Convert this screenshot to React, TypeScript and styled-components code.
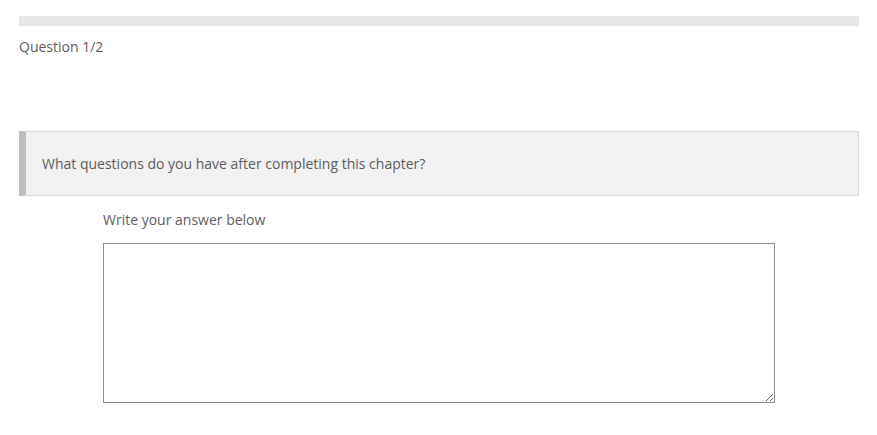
import React from "react";
import styled, { createGlobalStyle } from "styled-components";

const Global = createGlobalStyle`
  html, body {
    margin: 0;
    padding: 0;
    background: #fff;
  }
  body {
    font-family: "Open Sans", "Liberation Sans", sans-serif;
    color: #5e5e5e;
  }
`;

export default function App() {
  return (
    <>
      <Global />
      <Page>
        <Progress>
          <ProgressFill style={{ width: "0%" }} />
        </Progress>
        <Counter>Question 1/2</Counter>
        <Prompt>What questions do you have after completing this chapter?</Prompt>
        <Answer>
          <Label htmlFor="answer">Write your answer below</Label>
          <TextArea id="answer" />
        </Answer>
      </Page>
    </>
  );
}

const Page = styled.main`
  padding: 16px 18px 0 19px;
`;

const Progress = styled.div`
  height: 10px;
  background: #e6e6e6;
`;

const ProgressFill = styled.div`
  height: 100%;
  background: #4a90d9;
`;

const Counter = styled.div`
  margin-top: 12px;
  font-size: 14px;
  line-height: 18px;
`;

const Prompt = styled.div`
  margin-top: 75px;
  height: 65px;
  box-sizing: border-box;
  display: flex;
  align-items: center;
  padding: 0 16px 0 16px;
  background: #f1f1f1;
  border: 1px solid #dadada;
  border-left: 7px solid #bdbdbd;
  font-size: 14px;
`;

const Answer = styled.div`
  margin: 0 10%;
  padding-top: 15px;
  display: flex;
  flex-direction: column;
`;

const Label = styled.label`
  font-size: 14px;
  line-height: 18px;
`;

const TextArea = styled.textarea`
  margin-top: 14px;
  height: 160px;
  box-sizing: border-box;
  border: 1px solid #8e8e8e;
  border-radius: 0;
  font-family: inherit;
  font-size: 14px;
  resize: vertical;
  outline: none;
`;
